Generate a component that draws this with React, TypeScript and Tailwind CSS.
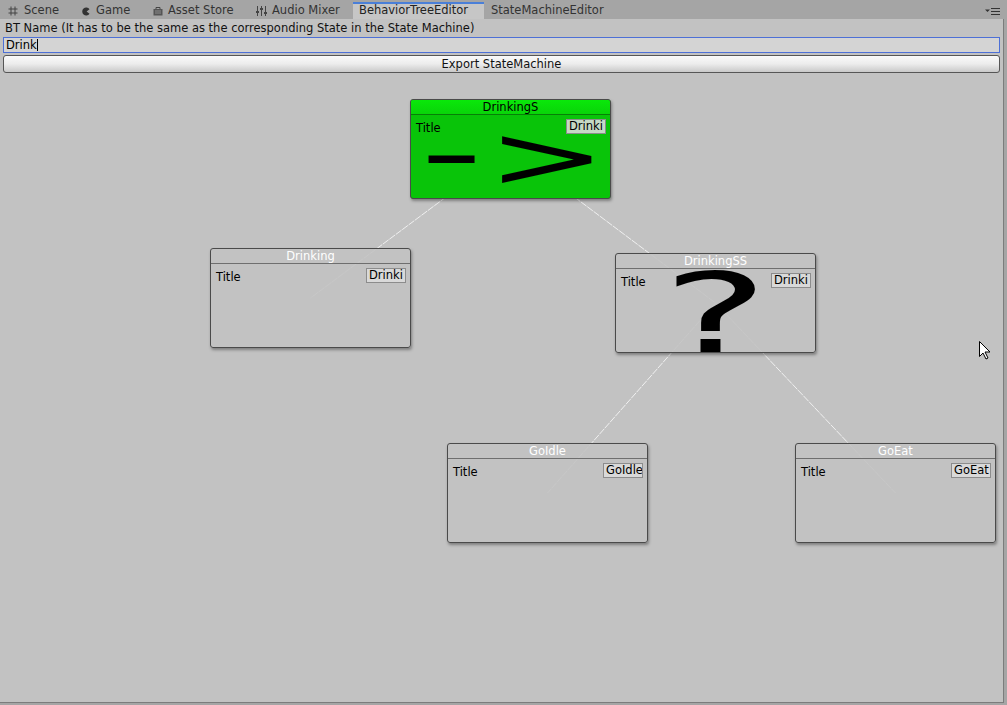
import React from 'react';

const font = { fontFamily: '"DejaVu Sans", Verdana, sans-serif' };

type NodeProps = {
    title: string;
    value: string;
    left: number;
    top: number;
    green?: boolean;
    children?: React.ReactNode;
};

function TreeNode({ title, value, left, top, green, children }: NodeProps) {
    return (
        <div
            className={`absolute w-[201px] h-[100px] rounded-[3px] border border-[#4a4a4a] overflow-hidden shadow-[1px_2px_3px_rgba(0,0,0,0.35)] ${green ? 'bg-[#09c409]' : 'bg-[#c2c2c2]/90'}`}
            style={{ left, top }}
        >
            <div
                className={`h-[15px] border-b text-[11.5px] leading-[15px] text-center ${green ? 'bg-gradient-to-b from-[#0ae80a] to-[#09d409] border-[#077f07] text-black' : 'border-[#6e6e6e] text-white'}`}
            >
                {title}
            </div>
            <div className="relative flex items-start justify-between pl-[5px] pr-[4px] pt-[4px]">
                <span className="text-[11.5px] leading-[16px] text-black mt-[1px]">Title</span>
                <div className="relative z-10 w-[40px] h-[15px] border border-[#8c8c8c] bg-[#dcdcdc]/90 text-[11.5px] leading-[13px] text-black pl-[2px] overflow-hidden whitespace-nowrap">
                    {value}
                </div>
            </div>
            {children}
        </div>
    );
}

function Tab({ icon, label, active, className }: { icon?: React.ReactNode; label: string; active?: boolean; className: string }) {
    return (
        <div
            className={`h-[17px] flex items-center gap-[5px] text-[11.5px] ${active ? 'bg-[#c6c6c6] border-t-2 border-[#4a7fd8] text-[#222] pb-[1px]' : 'text-[#333] pt-[1px]'} ${className}`}
        >
            {icon}
            <span>{label}</span>
        </div>
    );
}

export default function App() {
    return (
        <div className="w-[1007px] h-[705px] bg-[#a5a5a5] overflow-hidden text-black" style={font}>
            {/* tab strip */}
            <div className="h-[19px] flex items-end relative">
                <Tab
                    className="w-[70px] pl-[8px] gap-[6px]"
                    label="Scene"
                    icon={
                        <svg width="10" height="10" viewBox="0 0 10 10" className="text-[#444]">
                            <path d="M3 0.5v9M7 0.5v9M0.5 3h9M0.5 7h9" stroke="currentColor" strokeWidth="1" fill="none" />
                        </svg>
                    }
                />
                <Tab
                    className="w-[76px] pl-[12px] gap-[6px]"
                    label="Game"
                    icon={
                        <svg width="8" height="9" viewBox="0 0 8 9">
                            <path d="M7.5 2.2A4 4 0 1 0 7.5 6.8L4.6 4.5Z" fill="#333" />
                        </svg>
                    }
                />
                <Tab
                    className="w-[102px] pl-[7px] gap-[5px]"
                    label="Asset Store"
                    icon={
                        <svg width="10" height="10" viewBox="0 0 10 10">
                            <path d="M3 3V1.5h4V3" stroke="#444" fill="none" />
                            <rect x="0.5" y="3" width="9" height="6.5" fill="#555" />
                            <path d="M2 5h6M2 7h6" stroke="#999" strokeWidth="0.8" />
                        </svg>
                    }
                />
                <Tab
                    className="w-[104px] pl-[8px] gap-[5px]"
                    label="Audio Mixer"
                    icon={
                        <svg width="11" height="10" viewBox="0 0 11 10">
                            <path d="M1.5 0v10M5.5 0v10M9.5 0v10" stroke="#444" strokeWidth="1" />
                            <rect x="0" y="5" width="3" height="2" fill="#444" />
                            <rect x="4" y="2" width="3" height="2" fill="#444" />
                            <rect x="8" y="6" width="3" height="2" fill="#444" />
                        </svg>
                    }
                />
                <Tab className="w-[131px] pl-[6px] ml-[1px]" label="BehaviorTreeEditor" active />
                <Tab className="w-[126px] pl-[7px]" label="StateMachineEditor" />
                <div className="absolute right-[6px] top-[8px] flex items-center gap-[1px]">
                    <svg width="16" height="7" viewBox="0 0 16 7">
                        <path d="M0 1.5h5L2.5 4Z" fill="#333" />
                        <path d="M6 0.5h9M6 3.5h9M6 6.5h9" stroke="#333" strokeWidth="1" />
                    </svg>
                </div>
            </div>

            {/* editor panel */}
            <div className="w-[1004px] h-[684px] bg-[#c2c2c2] border-r border-b border-[#7c7c7c] flex flex-col">
                <div className="h-[18px] pl-[5px] pt-[1px] text-[11.5px] leading-[16px] text-[#111]">
                    BT Name (It has to be the same as the corresponding State in the State Machine)
                </div>
                <div className="mx-[3px] h-[16px] border border-[#4d70d6] bg-[#d4d4d4] text-[11.5px] leading-[14px] pl-[2px] flex items-center">
                    <span>Drink</span>
                    <span className="w-[1px] h-[12px] bg-black" />
                </div>
                <div className="mx-[3px] mt-[2px] h-[18px] border border-[#565656] rounded-[3px] bg-gradient-to-b from-[#fafafa] via-[#ececec] to-[#c9c9c9] text-[11.5px] leading-[16px] text-center text-[#111]">
                    Export StateMachine
                </div>

                {/* node canvas */}
                <div className="relative flex-1 mt-[1px]">
                    <svg className="absolute inset-0" width="1004" height="628">
                        <g stroke="#ffffff" strokeOpacity="0.75" strokeWidth="1" strokeDasharray="7 1">
                            <line x1="510.5" y1="75" x2="310.5" y2="224" />
                            <line x1="510.5" y1="75" x2="715.5" y2="229" />
                            <line x1="715.5" y1="229" x2="547.5" y2="419" />
                            <line x1="715.5" y1="229" x2="895.5" y2="419" />
                        </g>
                    </svg>

                    <TreeNode title="DrinkingS" value="Drinki" left={410} top={25} green>
                        <span
                            className="absolute left-[9px] top-[8px] text-[92px] leading-none text-black origin-left"
                            style={{ transform: 'scaleX(1.9)' }}
                        >
                            -
                        </span>
                        <span
                            className="absolute left-[76px] top-[13px] text-[88px] leading-none text-black origin-left"
                            style={{ transform: 'scaleX(1.62)' }}
                        >
                            &gt;
                        </span>
                    </TreeNode>
                    <TreeNode title="DrinkingSS" value="Drinki" left={615} top={179}>
                        <span
                            className="absolute left-[46px] top-[4px] text-[112px] leading-none text-black origin-left"
                            style={{ transform: 'scaleX(1.8)' }}
                        >
                            ?
                        </span>
                    </TreeNode>
                    <TreeNode title="Drinking" value="Drinki" left={210} top={174} />
                    <TreeNode title="GoIdle" value="GoIdle" left={447} top={369} />
                    <TreeNode title="GoEat" value="GoEat" left={795} top={369} />

                    {/* mouse pointer */}
                    <svg className="absolute left-[979px] top-[267px]" width="14" height="20" viewBox="0 0 14 20">
                        <path d="M0.5 0.5v15l3.5-3.5 3 6 2-1-3-6h5z" fill="#fff" stroke="#000" strokeWidth="1" />
                    </svg>
                </div>
            </div>
        </div>
    );
}
